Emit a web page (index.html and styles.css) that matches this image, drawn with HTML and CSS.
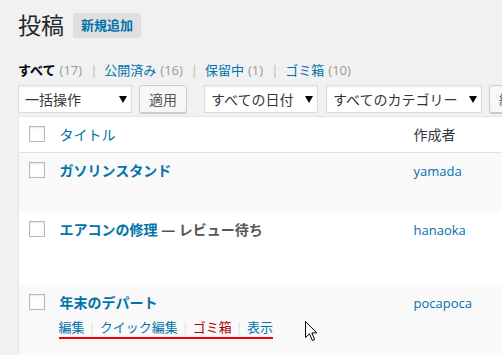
FILE: index.html
```html
<!DOCTYPE html>
<html lang="ja">
<head>
<meta charset="UTF-8">
<title>投稿</title>
<link rel="stylesheet" href="styles.css">
</head>
<body>
<div class="wrap">

  <!-- 見出し -->
  <div class="head">
    <h1>投稿</h1>
    <a class="add" href="#">新規追加</a>
  </div>

  <!-- ステータス -->
  <ul class="subsub">
    <li><a class="cur" href="#">すべて</a><span class="count">(17)</span><span class="bar">|</span></li>
    <li><a href="#">公開済み</a><span class="count">(16)</span><span class="bar">|</span></li>
    <li><a href="#">保留中</a><span class="count">(1)</span><span class="bar">|</span></li>
    <li><a href="#">ゴミ箱</a><span class="count">(10)</span></li>
  </ul>

  <!-- 絞り込み -->
  <div class="filters">
    <div class="sel w1"><select><option>一括操作</option></select></div>
    <button class="btn">適用</button>
    <div class="sel w2 gap"><select><option>すべての日付</option></select></div>
    <div class="sel w3"><select><option>すべてのカテゴリー</option></select></div>
    <button class="btn">絞り込み検索</button>
  </div>

  <!-- 一覧 -->
  <table class="list">
    <colgroup><col class="c-cb"><col class="c-title"><col></colgroup>
    <thead>
      <tr><th><input type="checkbox"></th><th class="t-link">タイトル</th><th>作成者</th></tr>
    </thead>
    <tbody>
      <tr class="alt r1">
        <td><input type="checkbox"></td>
        <td><a class="title" href="#">ガソリンスタンド</a></td>
        <td><a class="author" href="#">yamada</a></td>
      </tr>
      <tr class="r2">
        <td><input type="checkbox"></td>
        <td><a class="title" href="#">エアコンの修理</a><span class="state"> — レビュー待ち</span></td>
        <td><a class="author" href="#">hanaoka</a></td>
      </tr>
      <tr class="alt r3">
        <td><input type="checkbox"></td>
        <td>
          <a class="title" href="#">年末のデパート</a>
          <div class="actions">
            <a href="#">編集</a><span class="sep">|</span><a href="#">クイック編集</a><span class="sep">|</span><a class="trash" href="#">ゴミ箱</a><span class="sep">|</span><a href="#">表示</a>
          </div>
        </td>
        <td><a class="author" href="#">pocapoca</a></td>
      </tr>
    </tbody>
  </table>

  <!-- マウスカーソル -->
  <svg class="cursor" width="13" height="21" viewBox="0 0 13 21">
    <polygon points="0.5,0.5 0.5,16.5 4.5,12.8 7.3,19.5 9.6,18.5 6.9,11.9 11.8,11.9" fill="#fff" stroke="#000" stroke-width="1" stroke-linejoin="miter"/>
  </svg>
</div>
</body>
</html>
```

FILE: styles.css
```css
:root{--blue:#0073aa;--text:#32373c;--line:#e5e5e5}
*{box-sizing:border-box}
html,body{margin:0;height:100%;overflow:hidden}
body{
  background:#f1f1f1;color:var(--text);
  font-family:"Open Sans","Noto Sans CJK JP",sans-serif;font-size:13px}
a{color:var(--blue);text-decoration:none}
.wrap{position:relative;padding-left:18px;width:700px}

/* 見出し */
.head{display:flex;align-items:center;padding-top:13px;height:38px}
h1{margin:0;font-size:23px;font-weight:400;line-height:25px;color:#23282d}
.add{
  margin-left:9px;padding:0 8px;height:25px;line-height:25px;
  background:#e0e0e0;border-radius:2px;font-weight:700}

/* ステータス */
.subsub{display:flex;list-style:none;margin:22px 0 0;padding:0;line-height:20px}
.subsub .cur{color:#000;font-weight:700}
.count{color:#999;margin-left:4px}
.bar{color:#b4b9be;margin:0 7px 0 8px}

/* 絞り込み */
.filters{display:flex;margin-top:5px;height:28px}
.sel{position:relative;height:28px}
.sel select{
  appearance:none;-webkit-appearance:none;width:100%;height:28px;
  border:1px solid #ddd;background:#fff;border-radius:0;
  box-shadow:inset 0 1px 2px rgba(0,0,0,.07);
  font:14px "Open Sans","Noto Sans CJK JP",sans-serif;color:var(--text);
  padding:0 20px 0 6px}
.sel::after{
  content:"";position:absolute;right:5px;top:11px;
  border-left:4px solid transparent;border-right:4px solid transparent;
  border-top:7px solid #000}
.w1{width:114px}
.w2{width:114px}
.w3{width:156px;margin-left:8px}
.gap{margin-left:17px}
.btn{
  margin-left:7px;height:28px;padding:0 9px;
  background:#f7f7f7;border:1px solid #ccc;border-radius:3px;
  box-shadow:0 1px 0 #ccc;color:#555;
  font:14px "Open Sans","Noto Sans CJK JP",sans-serif;white-space:nowrap}

/* 一覧 */
.list{
  margin-top:3px;width:640px;table-layout:fixed;border-collapse:collapse;
  background:#fff;border:1px solid var(--line)}
.c-cb{width:31px}
.c-title{width:354px}
.list th,.list td{text-align:left;vertical-align:top;padding:8px 10px;line-height:20px}
.list th{font-weight:400;font-size:14px;padding-bottom:7px;border-bottom:1px solid #e1e1e1}
.list th:first-child,.list td:first-child{padding-left:10px;padding-right:0}
.t-link{color:var(--blue)}
.alt{background:#f9f9f9}
.r1{height:59px}
.r2{height:73px}
.r3{height:80px}
.list input{
  appearance:none;-webkit-appearance:none;display:block;
  width:16px;height:16px;margin:1px 0 0;
  border:1px solid #b4b9be;background:#fff;
  box-shadow:inset 0 1px 2px rgba(0,0,0,.1)}
.title{font-size:14px;font-weight:700}
.state{font-size:14px;font-weight:700;color:#555}
.author{font-size:13px}
.actions{
  display:table;margin:4px 0 0 -1px;padding:0 2px 3px 1px;
  line-height:20px;border-bottom:2px solid #e00}
.sep{color:#ddd;margin:0 4px}
.trash{color:#a00}

.cursor{position:absolute;left:305px;top:321px}
```
